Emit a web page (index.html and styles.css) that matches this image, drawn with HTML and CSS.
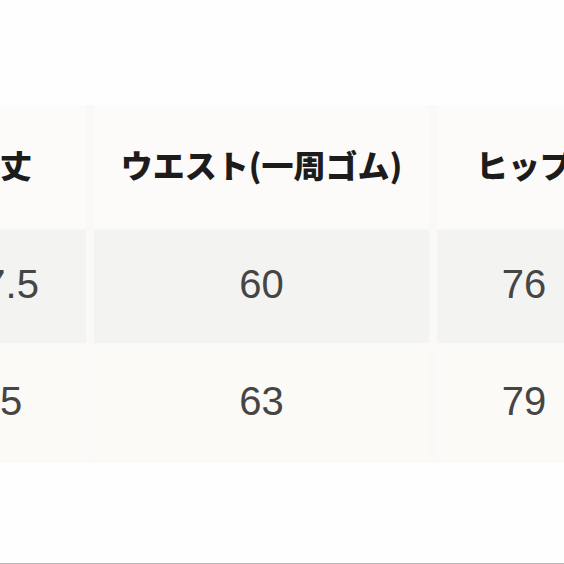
FILE: index.html
```html
<!DOCTYPE html>
<html lang="ja">
<head>
<meta charset="utf-8">
<title>サイズ表</title>
<link rel="stylesheet" href="styles.css">
</head>
<body>
<div class="page">
  <div class="size-table">
    <div class="cell head">着丈</div>
    <div class="cell head">ウエスト(一周ゴム)</div>
    <div class="cell head">ヒップ</div>
    <div class="cell row1">67.5</div>
    <div class="cell row1">60</div>
    <div class="cell row1">76</div>
    <div class="cell row2">65</div>
    <div class="cell row2">63</div>
    <div class="cell row2">79</div>
  </div>
</div>
</body>
</html>
```
FILE: styles.css
```css
html, body {
  margin: 0;
  padding: 0;
  background: #fefefe;
}
.page {
  width: 564px;
  height: 564px;
  box-sizing: border-box;
  overflow: hidden;
  padding-top: 105px;
  border-bottom: 1px solid #b4b4b4;
  background: #fefefe;
}
.size-table {
  display: grid;
  grid-template-columns: 172px 335px 174px;
  grid-template-rows: 123px 113px 118px;
  column-gap: 8px;
  row-gap: 2px;
  margin-left: -86px;
  width: 697px;
  background: #faf9f7;
}
.cell {
  display: flex;
  align-items: center;
  justify-content: center;
  padding-bottom: 6px;
  box-sizing: border-box;
  line-height: 1;
  white-space: nowrap;
}
.head {
  background: #fcfbf9;
  font-family: "Noto Sans CJK JP", "Noto Sans", sans-serif;
  font-weight: 900;
  font-size: 32px;
  color: #1c1c1c;
}
.row1 {
  background: #f3f3f2;
  font-family: "Liberation Sans", Arial, sans-serif;
  font-size: 40px;
  color: #454545;
}
.row2 {
  background: #fcfaf7;
  font-family: "Liberation Sans", Arial, sans-serif;
  font-size: 40px;
  color: #454545;
}
```
